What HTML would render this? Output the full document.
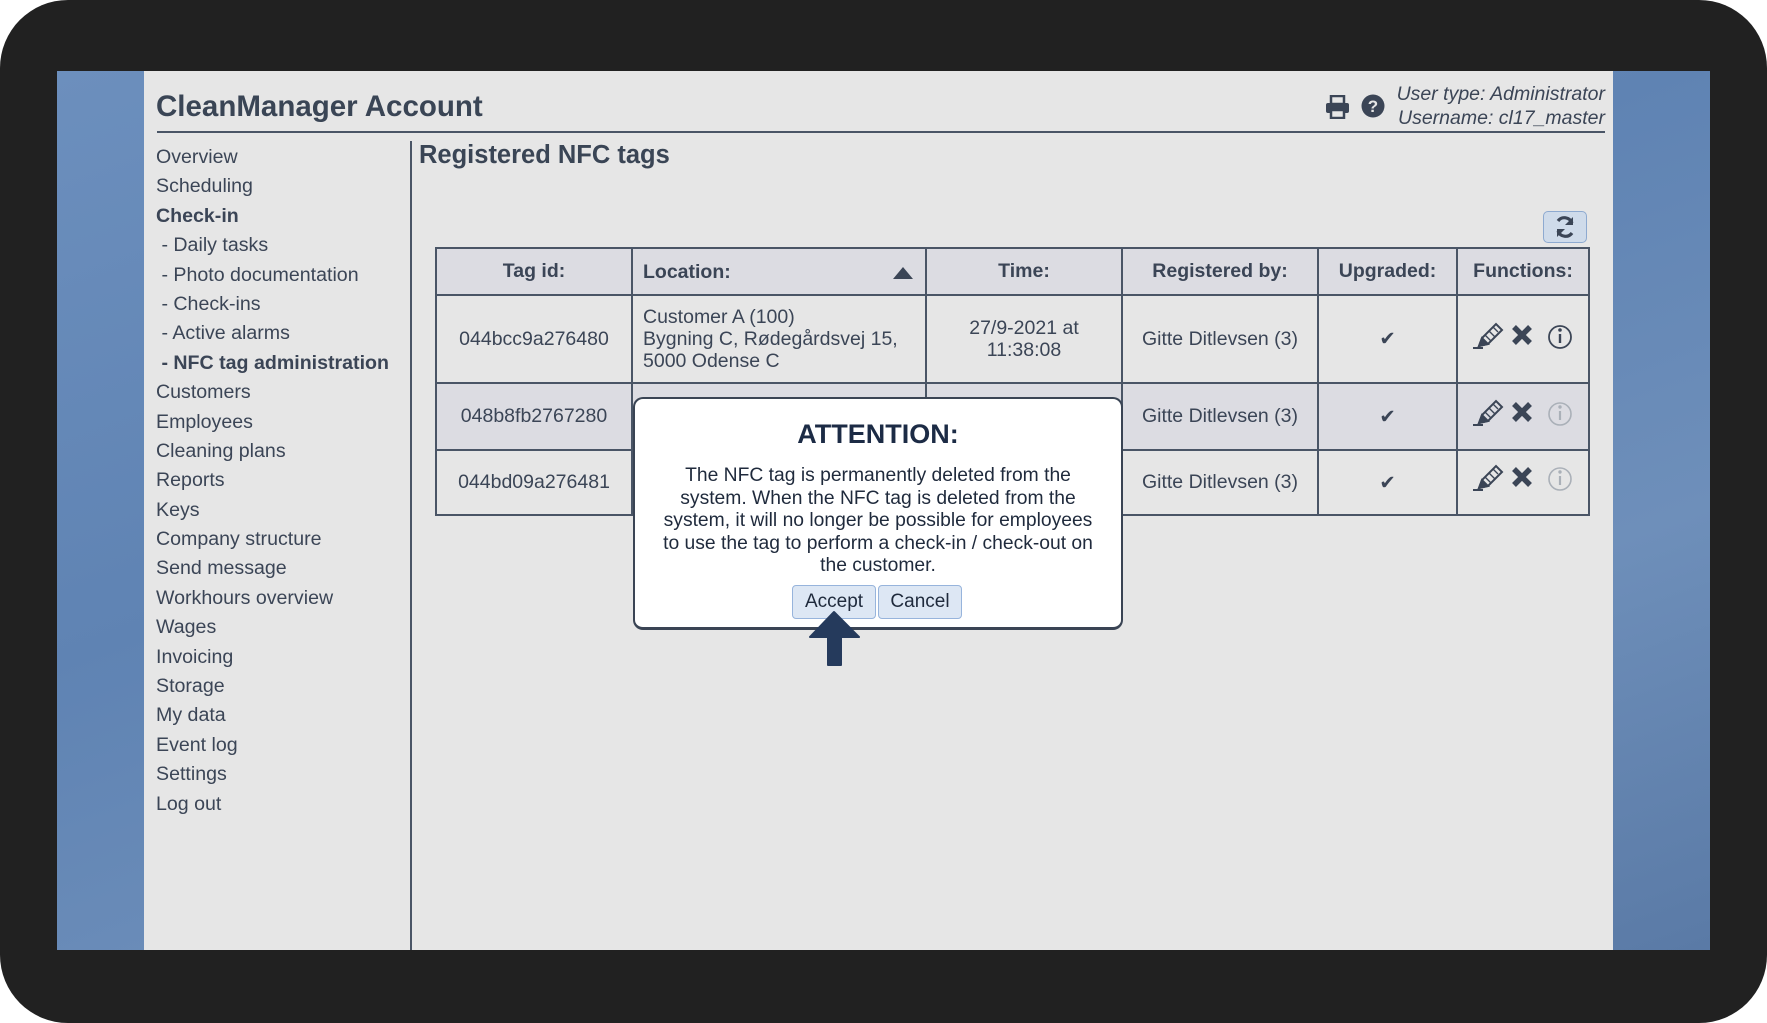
<!DOCTYPE html>
<html><head><meta charset="utf-8"><style>
*{margin:0;padding:0;box-sizing:border-box}
body{width:1767px;height:1023px;background:#fff;font-family:"Liberation Sans",Arial,sans-serif;color:#3b4556;position:relative;overflow:hidden}
.frame{position:absolute;left:0;top:0;width:1767px;height:1023px;background:#212121;border-radius:68px}
.blue{position:absolute;left:57px;top:71px;width:1653px;height:879px;background:linear-gradient(160deg,#6c8fbd 0%,#5f83b3 40%,#6e8fba 70%,#5a7aa6 100%)}
.panel{position:absolute;left:144px;top:71px;width:1469px;height:879px;background:#e6e6e6}
.a{position:absolute;white-space:nowrap}
.title{left:156px;top:90px;font-size:29.5px;font-weight:bold;color:#3a4555}
.hline{position:absolute;left:157px;top:131px;width:1448px;height:2px;background:#4a5566}
.vline{position:absolute;left:410px;top:141px;width:2px;height:809px;background:#4a5566}
.user{right:162px;font-style:italic;font-size:19.5px;text-align:right}
.menu{position:absolute;left:156px;top:143px;font-size:19.6px;line-height:29.4px}
.menu div{height:29.4px}
.b{font-weight:bold}
h2{position:absolute;left:419px;top:141px;font-size:25.5px;font-weight:bold;color:#3a4555}
.refresh{position:absolute;left:1543px;top:211px;width:44px;height:32px;background:#cfdbea;border:1px solid #8eaad0;border-radius:5px}
table{position:absolute;left:435px;top:247px;border-collapse:collapse;font-size:19.5px;color:#3b4556}
td,th{border:2px solid #4a5566;text-align:center;vertical-align:middle;padding:0}
th{background:#dcdce2;height:47px;font-size:19.5px}
tr.r1 td{height:88px}
tr.r2 td{height:67px;background:#dcdce2}
tr.r3 td{height:65px}
td.loc,th.loc{text-align:left;padding-left:10px;line-height:22px}
.dlg{position:absolute;left:633px;top:397px;width:490px;height:233px;background:#fff;border:2px solid #3a4454;border-bottom-width:3px;border-radius:10px;text-align:center;color:#1f2a3c}
.dlg h3{margin-top:20px;font-size:27px;font-weight:bold;color:#1c2b45}
.dlg p{margin-top:15px;font-size:19.3px;line-height:22.6px;padding:0 22px}
.btn{position:absolute;top:186px;height:34px;background:#dde7f4;border:1px solid #97b4dc;border-radius:4px;font-size:19px;line-height:32px;color:#1f2a3c}
</style></head><body>
<div class="frame"></div>
<div class="blue"></div>
<div class="panel"></div>
<div class="a title">CleanManager Account</div>
<svg class="a" style="left:1325px;top:95px" width="25" height="24" viewBox="0 0 25 24"><rect x="6" y="1" width="13" height="8" fill="none" stroke="#3b4556" stroke-width="2.5"/><rect x="1" y="8" width="23" height="10" rx="2" fill="#3b4556"/><rect x="6" y="15" width="13" height="8" fill="#e6e6e6" stroke="#3b4556" stroke-width="2.5"/></svg>
<svg class="a" style="left:1361px;top:94px" width="24" height="24" viewBox="0 0 24 24"><circle cx="12" cy="12" r="11.5" fill="#3b4556"/><text x="12" y="18" text-anchor="middle" font-family="Liberation Sans" font-weight="bold" font-size="17" fill="#e6e6e6">?</text></svg>
<div class="a user" style="top:83px">User type: Administrator</div>
<div class="a user" style="top:107px">Username: cl17_master</div>
<div class="hline"></div>
<div class="vline"></div>
<div class="menu">
<div>Overview</div><div>Scheduling</div><div class="b">Check-in</div><div>&nbsp;- Daily tasks</div><div>&nbsp;- Photo documentation</div><div>&nbsp;- Check-ins</div><div>&nbsp;- Active alarms</div><div class="b">&nbsp;- NFC tag administration</div><div>Customers</div><div>Employees</div><div>Cleaning plans</div><div>Reports</div><div>Keys</div><div>Company structure</div><div>Send message</div><div>Workhours overview</div><div>Wages</div><div>Invoicing</div><div>Storage</div><div>My data</div><div>Event log</div><div>Settings</div><div>Log out</div>
</div>
<h2>Registered NFC tags</h2>
<div class="refresh"><svg width="42" height="30" viewBox="0 0 42 30"><path d="M28 11a8 8 0 0 0-14-2M14 19a8 8 0 0 0 14 2" fill="none" stroke="#3b4556" stroke-width="3.2"/><path d="M29 5v8h-8z M13 25v-8h8z" fill="#3b4556"/></svg></div>
<table>
<colgroup><col style="width:196px"><col style="width:294px"><col style="width:196px"><col style="width:196px"><col style="width:139px"><col style="width:132px"></colgroup>
<tr><th>Tag id:</th><th class="loc">Location:<svg style="float:right;margin:6px 12px 0 0" width="20" height="12"><path d="M10 0L20 12H0z" fill="#3b4556"/></svg></th><th>Time:</th><th>Registered by:</th><th>Upgraded:</th><th>Functions:</th></tr>
<tr class="r1"><td>044bcc9a276480</td><td class="loc">Customer A (100)<br>Bygning C, Rødegårdsvej 15,<br>5000 Odense C</td><td style="line-height:22px">27/9-2021 at<br>11:38:08</td><td>Gitte Ditlevsen (3)</td><td>✔</td><td class="fn"></td></tr>
<tr class="r2"><td>048b8fb2767280</td><td class="loc">Customer A (100)</td><td>27/9-2021</td><td>Gitte Ditlevsen (3)</td><td>✔</td><td></td></tr>
<tr class="r3"><td>044bd09a276481</td><td class="loc"></td><td></td><td>Gitte Ditlevsen (3)</td><td>✔</td><td></td></tr>
</table>
<svg class="a" style="left:1470px;top:322px" width="110" height="180" viewBox="0 0 110 180">
<defs>
<g id="pen" fill="none" stroke="#3b4556" stroke-width="2"><path d="M3 26h10M9 24l3-8 14-14 6 6-14 14z"/><path d="M15 13l6 6M19 9l6 6M23 5l5 5" stroke-width="1.4"/><path d="M9 24l3-8 6 6z" fill="#3b4556"/></g>
<path id="x" d="M44 5l16 16M60 5L44 21" fill="none" stroke="#3b4556" stroke-width="5.5"/>
</defs>
<use href="#pen"/><use href="#x"/>
<g fill="none" stroke="#3b4556"><circle cx="90" cy="15" r="11" stroke-width="1.8"/><path d="M90 12v9" stroke-width="2.4"/><circle cx="90" cy="8" r="1.3" fill="#3b4556"/></g>
<g transform="translate(0,77)"><use href="#pen"/><use href="#x"/>
<g fill="none" stroke="#aab0b8"><circle cx="90" cy="15" r="11" stroke-width="1.6"/><path d="M90 12v9" stroke-width="2.2"/><circle cx="90" cy="8" r="1.2" fill="#aab0b8"/></g></g>
<g transform="translate(0,142)"><use href="#pen"/><use href="#x"/>
<g fill="none" stroke="#aab0b8"><circle cx="90" cy="15" r="11" stroke-width="1.6"/><path d="M90 12v9" stroke-width="2.2"/><circle cx="90" cy="8" r="1.2" fill="#aab0b8"/></g></g>
</svg>
<div class="dlg">
<h3>ATTENTION:</h3>
<p>The NFC tag is permanently deleted from the system. When the NFC tag is deleted from the system, it will no longer be possible for employees to use the tag to perform a check-in / check-out on the customer.</p>
<div class="btn" style="left:157px;width:84px">Accept</div>
<div class="btn" style="left:243px;width:84px">Cancel</div>
</div>
<svg class="a" style="left:808px;top:610px" width="54" height="58" viewBox="0 0 54 58"><path d="M26 2L51 27H33V55H20V27H2z" fill="#253a5c" stroke="#253a5c" stroke-width="2" stroke-linejoin="round"/></svg>
</body></html>
